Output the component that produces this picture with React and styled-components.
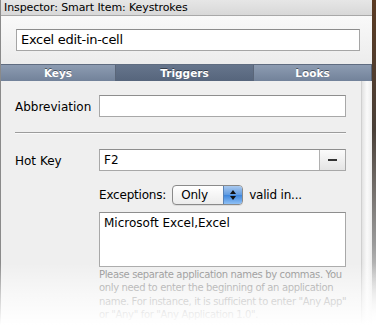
import React from "react";
import styled, { createGlobalStyle } from "styled-components";

const Global = createGlobalStyle`
  html, body { margin: 0; padding: 0; background: #ffffff; }
  body { font-family: "DejaVu Sans", "Liberation Sans", sans-serif; }
  * { box-sizing: border-box; }
`;

const Root = styled.div`
  position: relative;
  width: 376px;
  height: 325px;
  display: flex;
  overflow: hidden;
`;

const Window = styled.div`
  width: 372px;
  display: flex;
  flex-direction: column;
  border-left: 1px solid #8a8a8a;
  & > * { flex-shrink: 0; }
`;

const Edge = styled.div`
  width: 4px;
  background: linear-gradient(#5a3a22, #4a4038 40%, #9a9a9a 75%, #ffffff);
`;

const TitleBar = styled.div`
  height: 16px;
  background: linear-gradient(#e6e6e6, #d8d8d8);
  border-bottom: 1px solid #a8a8a8;
  font-size: 11px;
  line-height: 15px;
  padding-left: 3px;
  color: #000;
  letter-spacing: -0.1px;
`;

const NameArea = styled.div`
  height: 48px;
  background: linear-gradient(#f9f9f9, #ececec);
  padding: 13px 12px 0 15px;
`;

const NameField = styled.div`
  height: 22px;
  background: #fff;
  border: 1px solid #a5a5a5;
  border-top-color: #8c8c8c;
  font-size: 13px;
  line-height: 20px;
  padding-left: 4px;
  color: #000;
  letter-spacing: -0.3px;
`;

const TabBar = styled.div`
  height: 17px;
  display: flex;
  border-top: 1px solid #5f6c80;
`;

const Tab = styled.div`
  width: ${(p) => p.w}px;
  background: ${(p) =>
    p.active
      ? "linear-gradient(#66758c, #56657c)"
      : "linear-gradient(#8d9cb2, #72829a)"};
  color: #fff;
  font-weight: bold;
  font-size: 10.5px;
  line-height: 16px;
  text-align: center;
  text-shadow: 0 -1px 0 rgba(0, 0, 0, 0.45);
  border-right: 1px solid #5a6679;
`;

const Body = styled.div`
  flex: 1 0 auto;
  display: flex;
`;

const Content = styled.div`
  width: 361px;
  background: #efefef;
  padding: 14px 0 0 14px;
  border-right: 1px solid #d0d0d0;
`;

const Side = styled.div`
  flex: 1;
  background: linear-gradient(90deg, #e2e2e2, #fafafa 50%, #ececec);
`;

const Row = styled.div`
  display: grid;
  grid-template-columns: 84px 247px;
  align-items: center;
  height: 22px;
`;

const Label = styled.div`
  font-size: 12px;
  color: #000;
  padding-top: 1px;
`;

const Field = styled.div`
  height: 22px;
  background: #fff;
  border: 1px solid #a8a8a8;
  border-top-color: #8e8e8e;
  display: flex;
  font-size: 12px;
  line-height: 21px;
  color: #000;
`;

const FieldText = styled.div`
  flex: 1;
  padding-left: 4px;
`;

const MinusButton = styled.div`
  width: 26px;
  border-left: 1px solid #b0b0b0;
  background: linear-gradient(#fbfbfb, #e4e4e4);
  display: flex;
  align-items: center;
  justify-content: center;
  &::after {
    content: "";
    width: 9px;
    height: 2px;
    background: #333;
  }
`;

const Separator = styled.div`
  width: 331px;
  height: 2px;
  background: #9c9c9c;
  border-bottom: 1px solid #fafafa;
  margin: 15px 0 15px 0;
`;

const ExceptionsRow = styled.div`
  display: flex;
  align-items: center;
  margin: 14px 0 0 84px;
  font-size: 12px;
  color: #000;
  gap: 6px;
  height: 20px;
  letter-spacing: -0.2px;
`;

const Select = styled.div`
  width: 71px;
  height: 20px;
  border: 1px solid #8a8a8a;
  border-radius: 4px;
  display: flex;
  overflow: hidden;
  background: linear-gradient(#ffffff, #ececec);
  box-shadow: 0 1px 0 rgba(0, 0, 0, 0.08);
`;

const SelectText = styled.div`
  flex: 1;
  padding-left: 8px;
  font-size: 12px;
  line-height: 18px;
`;

const Stepper = styled.div`
  width: 19px;
  background: linear-gradient(#a9c9ef, #5f9ae0 50%, #3d86dd 51%, #8fc0f5);
  border-left: 1px solid #5a82b4;
  display: flex;
  flex-direction: column;
  align-items: center;
  justify-content: center;
  gap: 2px;
`;

const Arrow = styled.div`
  width: 0;
  height: 0;
  border-left: 3px solid transparent;
  border-right: 3px solid transparent;
  ${(p) =>
    p.up ? "border-bottom: 4px solid #111;" : "border-top: 4px solid #111;"}
`;

const TextArea = styled.div`
  margin: 7px 0 0 84px;
  width: 247px;
  height: 55px;
  background: #fff;
  border: 1px solid #a8a8a8;
  border-top-color: #8e8e8e;
  font-size: 12px;
  line-height: 18px;
  padding: 1px 4px;
  color: #000;
`;

const Help = styled.div`
  margin: 1px 0 0 84px;
  font-size: 10px;
  line-height: 13.4px;
  color: #8a8a8a;
  letter-spacing: -0.35px;
  white-space: nowrap;
`;

const HelpLine = styled.div``;

const Fade = styled.div`
  position: absolute;
  left: 0;
  right: 0;
  bottom: 0;
  height: 62px;
  background: linear-gradient(rgba(255, 255, 255, 0), rgba(255, 255, 255, 0.55) 50%, #ffffff);
  pointer-events: none;
`;

export default function App() {
  return (
    <>
      <Global />
      <Root>
        <Window>
          <TitleBar>Inspector: Smart Item: Keystrokes</TitleBar>
          <NameArea>
            <NameField>Excel edit-in-cell</NameField>
          </NameArea>
          <TabBar>
            <Tab w={115}>Keys</Tab>
            <Tab w={138} active>
              Triggers
            </Tab>
            <Tab w={118}>Looks</Tab>
          </TabBar>
          <Body>
            <Content>
              <Row>
                <Label>Abbreviation</Label>
                <Field>
                  <FieldText />
                </Field>
              </Row>
              <Separator />
              <Row>
                <Label>Hot Key</Label>
                <Field>
                  <FieldText>F2</FieldText>
                  <MinusButton />
                </Field>
              </Row>
              <ExceptionsRow>
                <span>Exceptions:</span>
                <Select>
                  <SelectText>Only</SelectText>
                  <Stepper>
                    <Arrow up />
                    <Arrow />
                  </Stepper>
                </Select>
                <span>valid in...</span>
              </ExceptionsRow>
              <TextArea>Microsoft Excel,Excel</TextArea>
              <Help>
                <HelpLine>Please separate application names by commas. You</HelpLine>
                <HelpLine>only need to enter the beginning of an application</HelpLine>
                <HelpLine>name. For instance, it is sufficient to enter "Any App"</HelpLine>
                <HelpLine>or "Any" for "Any Application 1.0".</HelpLine>
              </Help>
            </Content>
            <Side />
          </Body>
        </Window>
        <Edge />
        <Fade />
      </Root>
    </>
  );
}
